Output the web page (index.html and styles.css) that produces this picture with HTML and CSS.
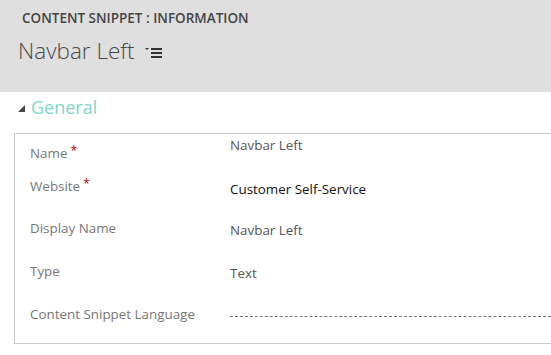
FILE: index.html
```html
<!DOCTYPE html>
<html lang="en">
<head>
    <meta charset="UTF-8">
    <title>Content Snippet : Information</title>
    <link rel="stylesheet" href="styles.css">
</head>
<body>
    <header class="page-header">
        <div class="entity-type">CONTENT SNIPPET : INFORMATION</div>
        <div class="record-title">
            <span>Navbar Left</span>
            <svg class="form-menu" width="18" height="10" viewBox="0 0 18 10">
                <polygon points="0,0 4,0 2,2" fill="#333"/>
                <rect x="6" y="0" width="11" height="2" fill="#333"/>
                <rect x="6" y="4" width="11" height="2" fill="#333"/>
                <rect x="6" y="8" width="11" height="2" fill="#333"/>
            </svg>
        </div>
    </header>

    <section class="section">
        <h2 class="section-title"><span class="caret"></span>General</h2>
        <div class="form-box">
            <div class="field field-name">
                <div class="label">Name<span class="req">*</span></div>
                <div class="value">Navbar Left</div>
            </div>
            <div class="field field-website">
                <div class="label">Website<span class="req">*</span></div>
                <div class="value dark">Customer Self-Service</div>
            </div>
            <div class="field">
                <div class="label">Display Name</div>
                <div class="value">Navbar Left</div>
            </div>
            <div class="field">
                <div class="label">Type</div>
                <div class="value">Text</div>
            </div>
            <div class="field">
                <div class="label">Content Snippet Language</div>
                <div class="value lookup"><div class="empty-lookup"></div></div>
            </div>
        </div>
    </section>
</body>
</html>
```

FILE: styles.css
```css
body { margin: 0; font-family: "Open Sans", "Noto Sans", sans-serif; background: white; overflow: hidden; }

.page-header {
    background: #dfdfdf;
    height: 92px;
    padding: 9px 0 0 22px;
    box-sizing: border-box;
}
.entity-type { font-size: 13.5px; font-weight: 600; color: #444; }
.record-title {
    display: flex;
    align-items: center;
    margin: 8px 0 0 -4px;
    font-size: 22.5px;
    font-weight: 300;
    color: #4a4a4a;
}
.form-menu { margin: 4px 0 0 10px; }

.section { padding: 0 0 0 14px; }
.section-title {
    display: flex;
    align-items: center;
    margin: 0;
    padding: 0 0 0 4px;
    height: 30px;
    font-size: 18px;
    font-weight: 400;
    color: #7dd8c6;
    box-sizing: border-box;
}
.caret {
    width: 0; height: 0;
    border-left: 7px solid transparent;
    border-bottom: 7px solid #444;
    margin: 2px 6px 0 0;
}

.form-box {
    border: 1px solid #c8c8c8;
    border-right: none;
    height: 211px;
    padding: 0 0 0 15px;
    margin-top: 11px;
    box-sizing: border-box;
}
.field { display: flex; height: 43px; font-size: 13.4px; }
.field-name { height: 33px; }
.label { width: 200px; flex-shrink: 0; color: #777; padding-top: 9px; }
.value { color: #555; padding-top: 11px; }
.field-name .label { padding-top: 10px; }
.field-name .value { padding-top: 2px; }
.field-website .label { padding-top: 10px; }
.field-website .value { padding-top: 13px; }
.value.dark { color: #111; }
.value.lookup { flex: 1; }
.req { color: #b00; margin-left: 3px; font-size: 12px; position: relative; top: -3px; }
.empty-lookup { border-top: 1px dashed #777; margin-top: 9px; }
```
